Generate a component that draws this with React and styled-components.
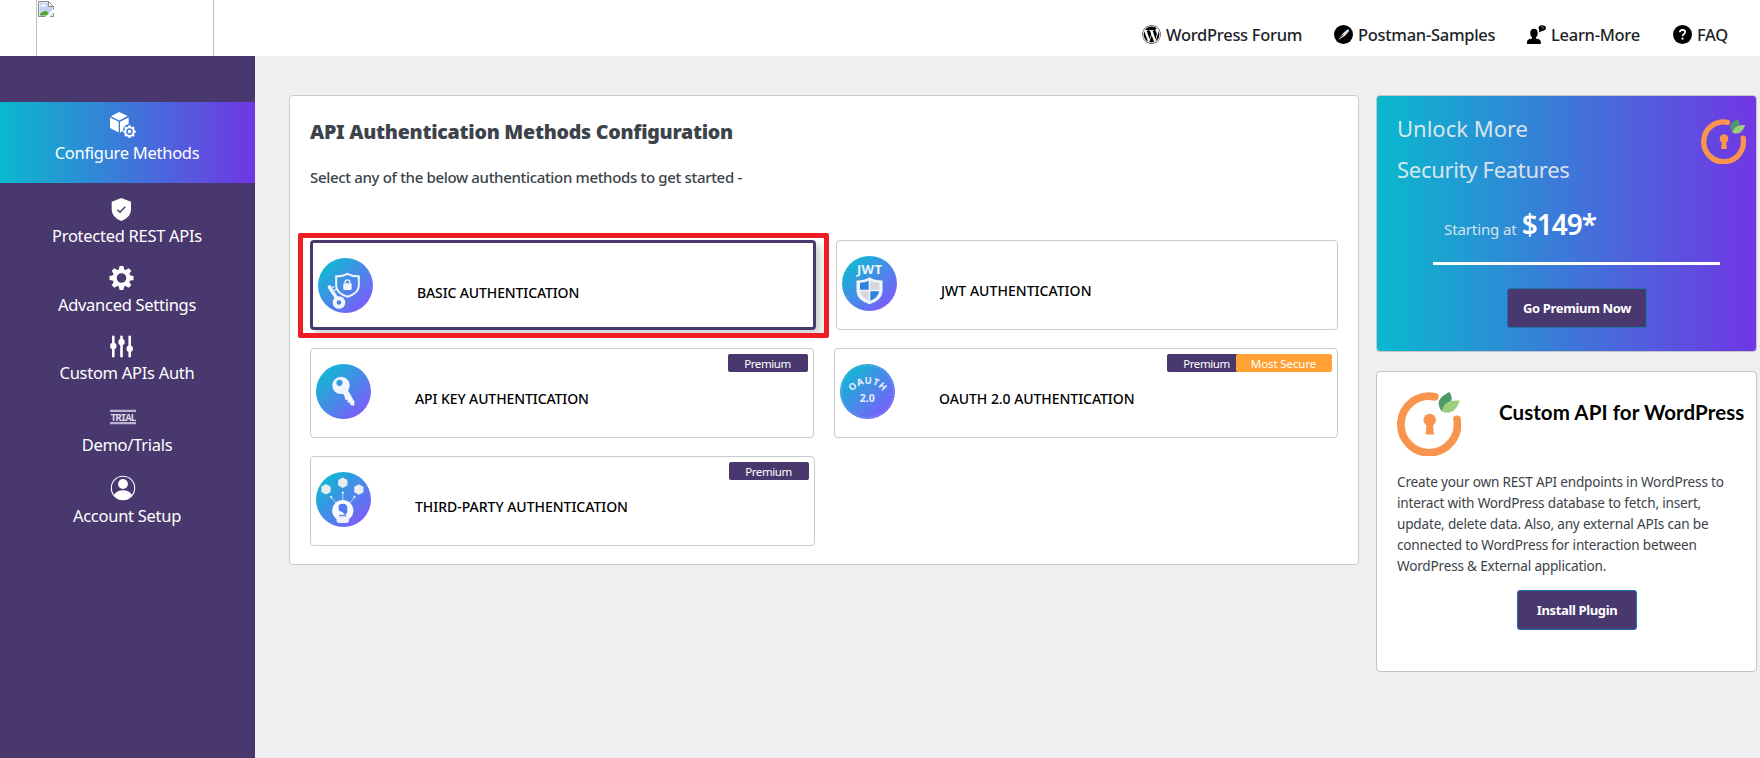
import React from "react";
import styled, { createGlobalStyle, css } from "styled-components";
import { FaWordpress } from "react-icons/fa";

const purple = "#48386d";
const brandGradient = "linear-gradient(to right, #09b9ce, #7136e4)";

const GlobalStyle = createGlobalStyle`
  *, *::before, *::after { box-sizing: border-box; }
  body {
    margin: 0;
    background: #efefef;
    color: #3c434a;
    font-family: "Noto Sans", "Open Sans", sans-serif;
  }
`;

/* ---------- page frame ---------- */

const Page = styled.div`
  display: flex;
  flex-direction: column;
  width: 1760px;
  height: 758px;
  overflow: hidden;
`;

const Header = styled.header`
  display: flex;
  justify-content: space-between;
  flex: none;
  height: 56px;
  padding: 0 27px 0 36px;
  background: #fff;
`;

const LogoSlot = styled.div`
  width: 178px;
  height: 56px;
  padding-left: 1px;
  border: solid #c0c0c0;
  border-width: 0 1px;
`;

const HeaderNav = styled.nav`
  display: grid;
  grid-template-columns: 192px 193px 146px 60px;
  align-items: center;
  height: 44px;
  margin-top: 12.5px;
`;

const HeaderLink = styled.a`
  display: flex;
  align-items: center;
  gap: 5px;
  color: #1d2327;
  font-size: 16.5px;
  font-weight: 500;
  letter-spacing: -0.28px;
  line-height: 24px;
  white-space: nowrap;

  svg { flex: none; width: 19px; height: 19px; color: #000; }
`;

const Body = styled.div`
  display: flex;
  flex: 1;
`;

/* ---------- sidebar ---------- */

const Sidebar = styled.aside`
  flex: none;
  width: 255px;
  padding-top: 46px;
  background: ${purple};
`;

const SideItem = styled.a`
  display: flex;
  flex-direction: column;
  gap: ${(p) => p.$gap || 3}px;
  padding-top: ${(p) => p.$top}px;
  color: #fff;
  ${(p) =>
    p.$active &&
    css`
      height: 81px;
      background: ${brandGradient};
    `}

  svg { flex: none; margin-left: 110px; overflow: visible; }
`;

const SideLabel = styled.span`
  padding-right: 1px;
  font-size: 16.5px;
  letter-spacing: -0.28px;
  line-height: 24px;
  text-align: center;
`;

/* ---------- main panel ---------- */

const Panel = styled.main`
  width: 1070px;
  height: 470px;
  margin: 39px 0 0 34px;
  padding: 22px 20px 18px;
  border: 1px solid #c9cacc;
  border-radius: 4px;
  background: #fff;
`;

const PanelTitle = styled.h1`
  margin: 0;
  font-size: 19.6px;
  font-weight: 900;
  letter-spacing: -0.26px;
  line-height: 28px;
`;

const PanelText = styled.p`
  margin: 19px 0 51px;
  font-size: 15px;
  font-weight: 500;
  letter-spacing: -0.33px;
  line-height: 24px;
`;

const MethodRows = styled.div`
  display: flex;
  flex-direction: column;
  gap: 18px;
`;

const MethodRow = styled.div`
  display: flex;
  gap: 20px;
`;

const MethodCard = styled.div`
  position: relative;
  display: flex;
  align-items: flex-start;
  flex: none;
  width: ${(p) => p.$width}px;
  height: 90px;
  padding: 5px;
  border: 1px solid #c9cacc;
  border-radius: 4px;
  background: #fff;
  ${(p) =>
    p.$selected &&
    css`
      border: 3px solid ${purple};
      box-shadow: 5px 5px 7px rgba(0, 0, 0, 0.18);
    `}

  > svg { flex: none; margin-top: 10px; }
`;

const MethodName = styled.span`
  margin: 35px auto 0 44px;
  color: #000;
  font-size: 14px;
  font-weight: 500;
  letter-spacing: ${(p) => p.$spacing || -0.09}px;
  line-height: 20px;
  white-space: nowrap;
`;

const Badge = styled.span`
  width: 80px;
  height: 18px;
  padding-right: 1px;
  border-radius: 2px;
  background: ${purple};
  color: #fff;
  font-size: 11.5px;
  letter-spacing: -0.4px;
  line-height: 19px;
  text-align: center;
  ${(p) =>
    p.$secure &&
    css`
      width: 96px;
      margin-left: -11px;
      background: #ffa135;
      letter-spacing: -0.1px;
    `}
`;

const Highlight = styled.div`
  position: absolute;
  top: -10px;
  left: -15px;
  width: 531px;
  height: 105px;
  border: 5px solid #ef1c24;
  border-radius: 2px;
`;

/* ---------- right column ---------- */

const Aside = styled.div`
  display: flex;
  flex-direction: column;
  gap: 19px;
  width: 381px;
  margin: 39px 0 0 17px;
`;

const PromoCard = styled.section`
  display: flex;
  flex-direction: column;
  align-items: flex-start;
  height: ${(p) => p.$height}px;
  border: 1px solid #c3c4c7;
  border-radius: 4px;
  background: ${(p) => (p.$gradient ? brandGradient : "#fff")};
`;

const UnlockTop = styled.div`
  display: flex;
  justify-content: space-between;
  align-self: stretch;
  height: 94px;
  padding: 12px 10px 0 20px;

  svg { margin-top: 11px; }
`;

const UnlockTitle = styled.h2`
  margin: 0;
  color: rgba(240, 240, 241, 0.9);
  font-size: 22px;
  font-weight: 400;
  letter-spacing: -0.3px;
  line-height: 41px;

  span { letter-spacing: 0; }
`;

const PriceLine = styled.div`
  display: flex;
  align-items: baseline;
  gap: 5px;
  height: 40px;
  margin: 14px 0 0 67px;
  color: rgba(240, 240, 241, 0.88);
  font-size: 15px;
  letter-spacing: -0.1px;
  line-height: 40px;
`;

const Price = styled.strong`
  color: #fff;
  font-size: 28px;
  font-weight: 600;
  letter-spacing: -1px;
`;

const Divider = styled.hr`
  width: 287px;
  height: 3px;
  margin: 18px 0 0 56px;
  border: 0;
  background: #fff;
`;

const ActionButton = styled.button`
  width: ${(p) => p.$width}px;
  height: 40px;
  margin: ${(p) => p.$top}px 0 0 ${(p) => p.$left}px;
  padding: 0;
  border: 1px solid #2271b1;
  border-radius: 3px;
  background: ${purple};
  color: #fff;
  font-family: inherit;
  font-size: 13px;
  font-weight: 700;
  letter-spacing: -0.35px;
  line-height: 38px;
`;

const PluginTop = styled.div`
  display: flex;
  gap: 38px;
  padding: 20px 0 0 20px;
`;

const PluginTitle = styled.h2`
  margin: 7px 0 0;
  color: #000;
  font-family: Lato, sans-serif;
  font-size: 20.5px;
  font-weight: 700;
  letter-spacing: 0.08px;
  line-height: 26px;
  white-space: nowrap;
`;

const PluginText = styled.p`
  margin: 15px 0 0 20px;
  font-size: 13.6px;
  letter-spacing: -0.2px;
  line-height: 21px;
  white-space: nowrap;
`;

/* ---------- icons ---------- */

const BrokenImage = () => (
  <svg width="16" height="16" viewBox="0 0 16 16">
    <path d="M.5.5h10l5 5v10H.5z" fill="#fff" />
    <path d="M1.5 1.5h9v4h4v9h-13z" fill="#c3d4f3" />
    <path d="M2.5 5.5q0-1.500 1.500-1.500q1-1.500 2.500-.5q1.500 0 1.500 2z" fill="#fff" />
    <path d="M1.500 14.500q1.500-4.500 6-4.500q2.500 0 4 4.500z" fill="#52a832" />
    <path d="M7 16 16 8v3l-5.500 5z" fill="#fff" />
    <path d="M15.500 8.500v-3l-5-5H.5v15h7M10.500.5v5h5M15.500 12v3.500H12" fill="none" stroke="#8b8b8b" />
  </svg>
);

const PostmanIcon = () => (
  <svg viewBox="0 0 19 19">
    <circle cx="9.500" cy="9.500" r="9.500" />
    <path d="M4.300 15 9 8.300l4.700-4.100q1.600.2 1.300 2L11 10.800z" fill="#e2e2e2" />
    <path d="m6.500 12.500 3-3" stroke="#000" strokeWidth=".6" />
  </svg>
);

const LearnIcon = () => (
  <svg viewBox="0 0 19 19">
    <ellipse cx="7" cy="8.200" rx="3.700" ry="4.400" />
    <path d="M5 11h4v2.500q4.500.6 4.800 3.200V19H0v-2.300q.4-2.600 5-3.200z" />
    <path d="M15 .2c2.300 0 4 1 4 2.800s-1.700 2.900-3.800 2.900L11.800 7.600l.6-2.700C10.500 2.500 12.200.2 15 .2z" />
    <path d="M14.200 2.200q1-1 2 0 .2.700-.9 1.300" fill="none" stroke="#aaa" strokeWidth=".7" />
  </svg>
);

const FaqIcon = () => (
  <svg viewBox="0 0 19 19">
    <circle cx="9.500" cy="9.500" r="9.500" />
    <path d="M6.800 7.300q.2-2.500 2.800-2.500 2.600.1 2.600 2.300 0 1.300-1.400 2.100-1.200.7-1.200 2.100" fill="none" stroke="#fff" strokeWidth="1.700" />
    <circle cx="9.500" cy="13.700" r="1.100" fill="#fff" />
  </svg>
);

const teeth = (n) => Array.from({ length: n }, (_, i) => (360 / n) * i);

const ConfigureIcon = () => (
  <svg width="26" height="26" viewBox="0 0 26 26" fill="#fff">
    <path d="M9.200 0 17.600 4 9.300 8.400.9 4.200z" />
    <path d="M0 5.400 8.700 9.800V20.500L0 15.900z" />
    <path d="M18.700 5.400v6.700q-5.800 1.200-6 7.200l-2.700 1.200V9.800z" />
    <circle cx="19.500" cy="19.600" r="4.300" fill="none" stroke="#fff" strokeWidth="1.900" />
    {teeth(8).map((a) => (
      <rect key={a} x="18.300" y="13.300" width="2.400" height="2.600" rx=".6" transform={`rotate(${a} 19.500 19.600)`} />
    ))}
    <circle cx="19.500" cy="19.600" r="1.800" />
  </svg>
);

const ShieldIcon = () => (
  <svg width="23" height="23" viewBox="0 0 23 23">
    <path d="M11.300 0 21 3.700v7.800q0 7.800-9.700 11.500Q1.700 19.300 1.700 11.500V3.700z" fill="#fff" />
    <path d="m7.300 11.700 2.700 2.600 5.200-5.600" fill="none" stroke={purple} strokeWidth="1.500" />
  </svg>
);

const GearIcon = () => (
  <svg width="23" height="24" viewBox="0 0 23 24" fill="#fff">
    <circle cx="11.500" cy="12" r="6.900" fill="none" stroke="#fff" strokeWidth="4.200" />
    {teeth(8).map((a) => (
      <path key={a} d="M9.600 0h3.800l.9 4H8.700z" transform={`rotate(${a} 11.500 12)`} />
    ))}
  </svg>
);

const SlidersIcon = () => (
  <svg width="23" height="23" viewBox="0 0 23 23" fill="#fff">
    <path d="M3.300 1.800v19.400M11.500 1.800v19.400M19.700 1.800v19.400" stroke="#fff" strokeWidth="2.600" strokeLinecap="round" />
    <circle cx="3.300" cy="11" r="3.200" />
    <circle cx="11.500" cy="7" r="3.200" />
    <circle cx="19.700" cy="13.700" r="3.200" />
  </svg>
);

const TrialIcon = () => (
  <svg width="26" height="16" viewBox="0 0 26 16">
    <path d="M0 1.800h26M0 14.200h26" stroke="#bab3cb" strokeWidth="2.200" />
    <text x="13" y="11.500" fill="#ddd9e6" fontFamily="Liberation Mono, monospace" fontWeight="700" fontSize="10" letterSpacing="-1" textAnchor="middle">
      TRIAL
    </text>
  </svg>
);

const AccountIcon = () => (
  <svg width="26" height="26" viewBox="0 0 26 26" fill="#fff">
    <circle cx="13" cy="13" r="11.700" fill="none" stroke="#fff" strokeWidth="1.100" />
    <circle cx="13" cy="9" r="4.900" />
    <path d="M4 20q2.500-4.800 9-4.800t9 4.800q-3.500 5-9 5t-9-5z" />
  </svg>
);

const OrangeLogo = ({ size }) => (
  <svg width={size} height={size} viewBox="0 0 64 64" fill="none">
    <path d="M37.800 4.700A28.300 28.300 0 1 0 60 27.300" stroke="#f9944e" strokeWidth="7.700" strokeLinecap="round" />
    <path d="M36 32.700l.9 9.900h-8.300l1-9.900z" fill="#f9944e" />
    <circle cx="32.700" cy="28" r="6.200" fill="#f9944e" />
    <path d="M52.300 0C46 3.500 40.500 7 41.800 13q.8 4 3.200 6.500 2-8.500 9.400-10.500Q55.500 4 52.300 0z" fill="#4d9967" />
    <path d="M62.700 8.600C53 7.500 45.500 11.500 45 19.500c8 3.500 14.500-.5 17.700-10.900z" fill="#9ccf7c" />
  </svg>
);

const Disc = ({ id, children }) => (
  <svg width="55" height="55" viewBox="0 0 55 55">
    <defs>
      <linearGradient id={id} x1="0.100" y1="0.100" x2="0.900" y2="0.900">
        <stop offset="0" stopColor="#0dbbd2" />
        <stop offset="1" stopColor="#7f5afc" />
      </linearGradient>
    </defs>
    <circle cx="27.500" cy="27.500" r="27.500" fill={`url(#${id})`} />
    {children}
  </svg>
);

const BasicIcon = () => (
  <Disc id="disc-basic">
    <path d="M18.200 18.300q6.500.3 11.300-2.500 4.800 2.800 11.300 2.500v10q-.4 7-11.300 10.500-10.900-3.500-11.300-10.500z" fill="none" stroke="#eef4fd" strokeWidth="2" />
    <rect x="25.300" y="25.300" width="8.300" height="6.600" rx="1" fill="#f3f6fe" />
    <path d="M27 25.500v-1.300q.2-2.400 2.500-2.400t2.500 2.400v1.300" fill="none" stroke="#f3f6fe" strokeWidth="1.300" />
    <path d="m11.500 29 7 11" stroke="#eef2fd" strokeWidth="3.600" strokeLinecap="round" />
    <path d="m16.500 32.500 2-1.500M14.500 29.700l1.500-1" stroke="#eef2fd" strokeWidth="1.500" />
    <circle cx="21" cy="44.500" r="4.300" fill="none" stroke="#f3f5fe" strokeWidth="4" />
  </Disc>
);

const KeyIcon = () => (
  <Disc id="disc-key">
    <path fillRule="evenodd" d="M25 12.700a8.700 8.700 0 1 0 0 17.400a8.700 8.700 0 1 0 0-17.400zM23.500 15.700a3.100 3.100 0 1 1 0 6.200a3.100 3.100 0 1 1 0-6.200z" fill="#f3f5fe" />
    <path d="m31.400 25.300 7.100 12.500-.4 4-3.700-.9-.4-2.200-2.300-.3-.2-2.500-2.500-.4-.2-2.700-2-3.500z" fill="#f3f5fe" />
  </Disc>
);

const JwtIcon = () => (
  <Disc id="disc-jwt">
    <text x="27.500" y="17.600" fill="#e9f4fb" fontFamily="Noto Sans, sans-serif" fontWeight="700" fontSize="13" textLength="25" textAnchor="middle">
      JWT
    </text>
    <path d="M27.500 21.300q5 3.200 13 3.200v11.200q-.8 8.700-13 12.500-12.200-3.800-13-12.500V24.500q8 0 13-3.200z" fill="#f1f3f6" />
    <path d="M18 26.800q5-.2 8.700-2V33.800H18z" fill="#2b84dc" />
    <path d="M28.300 24.800q4.200 1.900 9 2v7h-9z" fill="#d5d7dc" />
    <path d="M18.200 35.200h8.500v9q-7.500-2.700-8.500-9z" fill="#d5d7dc" />
    <path d="M28.300 35.200h8.800q-.8 6.300-8.800 9.500z" fill="#2b84dc" />
  </Disc>
);

const OauthIcon = () => (
  <Disc id="disc-oauth">
    <circle cx="27.500" cy="27.500" r="26" fill="none" stroke="#8fbcf3" strokeWidth=".8" strokeDasharray="1.500 1.700" />
    <path id="oauth-arc" d="M11 30A19 19 0 0 1 44.500 30" fill="none" />
    <text fill="#e6effb" fontFamily="Noto Sans, sans-serif" fontWeight="700" fontSize="9.500" letterSpacing="0.400">
      <textPath href="#oauth-arc" startOffset="50%" textAnchor="middle">OAUTH</textPath>
    </text>
    <text x="27.300" y="38.300" fill="#e6ecfd" fontFamily="Noto Sans, sans-serif" fontWeight="700" fontSize="10.500" textAnchor="middle">
      2.0
    </text>
  </Disc>
);

const hexagons = [
  [10, 17.300],
  [26.800, 10.800],
  [42.800, 17.500],
];

const ThirdPartyIcon = () => (
  <Disc id="disc-third">
    {hexagons.map(([x, y]) => (
      <path key={x} d={`M${x} ${y - 5.300}l4.600 2.600v5.400l-4.600 2.600l-4.600-2.600v-5.400z`} fill="#e9edf1" />
    ))}
    <path d="m20 31-4.800-6M26.800 29v-7.500M34 31l4.500-6" stroke="#b9d3fa" strokeWidth="1" />
    <g fill="#dbe7fc">
      <circle cx="15.200" cy="25" r="1.200" />
      <circle cx="26.800" cy="20.800" r="1.200" />
      <circle cx="38.500" cy="25" r="1.200" />
    </g>
    <circle cx="26.800" cy="38.500" r="10.600" fill="#fafaff" />
    <rect x="20.500" y="43" width="12.600" height="8" rx="3" fill="#f2f2ff" />
    <path d="M22.500 35q0-3.300 4.300-3.300t4.500 4v4.500q-1 2-2.500 2.500l-2-2.500-3.800-1.500z" fill="#4f7cf0" />
    <path d="M23.500 42.200l2 1 1.300-.6 1.300.6 2-1v2.500l-2-.8-1.300.5-1.300-.5-2 .8z" fill="#5a78f4" />
  </Disc>
);

/* ---------- content ---------- */

const sideItems = [
  { label: "Configure Methods", Icon: ConfigureIcon, top: 10, active: true },
  { label: "Protected REST APIs", Icon: ShieldIcon, top: 15 },
  { label: "Advanced Settings", Icon: GearIcon, top: 18 },
  { label: "Custom APIs Auth", Icon: SlidersIcon, top: 18 },
  { label: "Demo/Trials", Icon: TrialIcon, top: 24, gap: 8 },
  { label: "Account Setup", Icon: AccountIcon, top: 18 },
];

const headerLinks = [
  { label: "WordPress Forum", Icon: FaWordpress },
  { label: "Postman-Samples", Icon: PostmanIcon },
  { label: "Learn-More", Icon: LearnIcon },
  { label: "FAQ", Icon: FaqIcon },
];

const methodRows = [
  [
    { name: "BASIC AUTHENTICATION", Icon: BasicIcon, width: 506, selected: true, spacing: -0.12 },
    { name: "JWT AUTHENTICATION", Icon: JwtIcon, width: 502, spacing: 0.04 },
  ],
  [
    { name: "API KEY AUTHENTICATION", Icon: KeyIcon, width: 504, premium: true },
    { name: "OAUTH 2.0 AUTHENTICATION", Icon: OauthIcon, width: 504, premium: true, secure: true, spacing: -0.05 },
  ],
  [{ name: "THIRD-PARTY AUTHENTICATION", Icon: ThirdPartyIcon, width: 505, premium: true, spacing: -0.02 }],
];

function Method({ name, Icon, width, selected, premium, secure, spacing }) {
  return (
    <MethodCard $width={width} $selected={selected}>
      <Icon />
      <MethodName $spacing={spacing}>{name}</MethodName>
      {premium && <Badge>Premium</Badge>}
      {secure && <Badge $secure>Most Secure</Badge>}
      {selected && <Highlight />}
    </MethodCard>
  );
}

export default function App() {
  return (
    <Page>
      <GlobalStyle />
      <Header>
        <LogoSlot>
          <BrokenImage />
        </LogoSlot>
        <HeaderNav>
          {headerLinks.map(({ label, Icon }) => (
            <HeaderLink key={label}>
              <Icon />
              {label}
            </HeaderLink>
          ))}
        </HeaderNav>
      </Header>
      <Body>
        <Sidebar>
          {sideItems.map(({ label, Icon, top, gap, active }) => (
            <SideItem key={label} $top={top} $gap={gap} $active={active}>
              <Icon />
              <SideLabel>{label}</SideLabel>
            </SideItem>
          ))}
        </Sidebar>
        <Panel>
          <PanelTitle>API Authentication Methods Configuration</PanelTitle>
          <PanelText>Select any of the below authentication methods to get started -</PanelText>
          <MethodRows>
            {methodRows.map((row) => (
              <MethodRow key={row[0].name}>
                {row.map((m) => (
                  <Method key={m.name} {...m} />
                ))}
              </MethodRow>
            ))}
          </MethodRows>
        </Panel>
        <Aside>
          <PromoCard $height={257} $gradient>
            <UnlockTop>
              <UnlockTitle>
                <span>Unlock More</span>
                <br />
                Security Features
              </UnlockTitle>
              <OrangeLogo size={45} />
            </UnlockTop>
            <PriceLine>
              Starting at <Price>$149*</Price>
            </PriceLine>
            <Divider />
            <ActionButton $width={140} $top={23} $left={130}>
              Go Premium Now
            </ActionButton>
          </PromoCard>
          <PromoCard $height={301}>
            <PluginTop>
              <OrangeLogo size={64} />
              <PluginTitle>Custom API for WordPress</PluginTitle>
            </PluginTop>
            <PluginText>
              Create your own REST API endpoints in WordPress to
              <br />
              interact with WordPress database to fetch, insert,
              <br />
              update, delete data. Also, any external APIs can be
              <br />
              connected to WordPress for interaction between
              <br />
              WordPress &amp; External application.
            </PluginText>
            <ActionButton $width={120} $top={14} $left={140}>
              Install Plugin
            </ActionButton>
          </PromoCard>
        </Aside>
      </Body>
    </Page>
  );
}
